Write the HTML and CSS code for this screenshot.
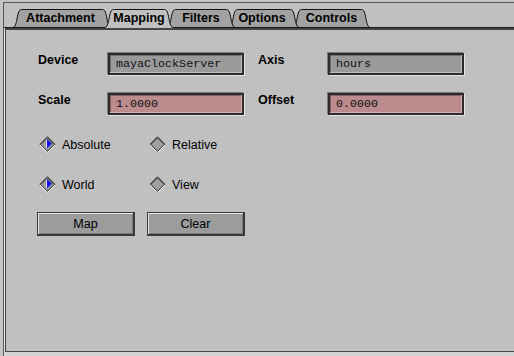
FILE: index.html
```html
<!DOCTYPE html>
<html lang="en">
<head>
    <title>Mapping</title>
    <link rel="stylesheet" href="styles.css">
</head>
<body>
    <div class="window">
        <div class="tabs">
            <div class="tab tab-attachment">
                <svg width="100" height="19"><path d="M0.5,18.5 C3,18.5 4,15 5,10 C6,4 7,0.5 9.5,0.5 L90.5,0.5 C93,0.5 94,4 95,10 C96,15 97,18.5 99.5,18.5 Z"/></svg>
                <span>Attachment</span>
            </div>
            <div class="tab tab-mapping active">
                <svg width="70" height="19"><path d="M0.5,19 L0.5,18.5 C3,18.5 4,15 5,10 C6,4 7,0.5 9.5,0.5 L60.5,0.5 C63,0.5 64,4 65,10 C66,15 67,18.5 69.5,18.5 L69.5,19"/></svg>
                <span>Mapping</span>
            </div>
            <div class="tab tab-filters">
                <svg width="70" height="19"><path d="M0.5,18.5 C3,18.5 4,15 5,10 C6,4 7,0.5 9.5,0.5 L60.5,0.5 C63,0.5 64,4 65,10 C66,15 67,18.5 69.5,18.5 Z"/></svg>
                <span>Filters</span>
            </div>
            <div class="tab tab-options">
                <svg width="72" height="19"><path d="M0.5,18.5 C3,18.5 4,15 5,10 C6,4 7,0.5 9.5,0.5 L62.5,0.5 C65,0.5 66,4 67,10 C68,15 69,18.5 71.5,18.5 Z"/></svg>
                <span>Options</span>
            </div>
            <div class="tab tab-controls">
                <svg width="79" height="19"><path d="M0.5,18.5 C3,18.5 4,15 5,10 C6,4 7,0.5 9.5,0.5 L69.5,0.5 C72,0.5 73,4 74,10 C75,15 76,18.5 78.5,18.5 Z"/></svg>
                <span>Controls</span>
            </div>
        </div>

        <div class="panel">
            <div class="frame">
                <div class="body">
                    <div class="fields">
                        <label>Device</label>
                        <div class="field">mayaClockServer</div>
                        <label>Axis</label>
                        <div class="field">hours</div>
                        <label>Scale</label>
                        <div class="field field-num">1.0000</div>
                        <label>Offset</label>
                        <div class="field field-num">0.0000</div>
                    </div>

                    <div class="radios">
                        <div class="radio on">
                            <svg width="17" height="17" viewBox="0 0 17 17">
                                <polygon class="fill" points="8.5,0.5 16.5,8.5 8.5,16.5 0.5,8.5"/>
                                <polyline class="lo" points="0.5,8.5 8.5,16.5 16.5,8.5"/>
                                <polyline class="hi" points="0.5,8.5 8.5,0.5 16.5,8.5"/>
                                <polygon class="edge" points="8.5,1.8 15.2,8.5 8.5,15.2 1.8,8.5"/>
                                <line class="dot-hi" x1="7.5" y1="3.5" x2="7.5" y2="12.5"/>
                                <polygon class="dot" points="8,3 13,7.8 8,12.6"/>
                            </svg>
                            <span>Absolute</span>
                        </div>
                        <div class="radio">
                            <svg width="17" height="17" viewBox="0 0 17 17">
                                <polygon class="fill" points="8.5,0.5 16.5,8.5 8.5,16.5 0.5,8.5"/>
                                <polyline class="lo" points="0.5,8.5 8.5,16.5 16.5,8.5"/>
                                <polyline class="hi" points="0.5,8.5 8.5,0.5 16.5,8.5"/>
                                <polygon class="edge" points="8.5,1.8 15.2,8.5 8.5,15.2 1.8,8.5"/>
                            </svg>
                            <span>Relative</span>
                        </div>
                        <div class="radio on">
                            <svg width="17" height="17" viewBox="0 0 17 17">
                                <polygon class="fill" points="8.5,0.5 16.5,8.5 8.5,16.5 0.5,8.5"/>
                                <polyline class="lo" points="0.5,8.5 8.5,16.5 16.5,8.5"/>
                                <polyline class="hi" points="0.5,8.5 8.5,0.5 16.5,8.5"/>
                                <polygon class="edge" points="8.5,1.8 15.2,8.5 8.5,15.2 1.8,8.5"/>
                                <line class="dot-hi" x1="7.5" y1="3.5" x2="7.5" y2="12.5"/>
                                <polygon class="dot" points="8,3 13,7.8 8,12.6"/>
                            </svg>
                            <span>World</span>
                        </div>
                        <div class="radio">
                            <svg width="17" height="17" viewBox="0 0 17 17">
                                <polygon class="fill" points="8.5,0.5 16.5,8.5 8.5,16.5 0.5,8.5"/>
                                <polyline class="lo" points="0.5,8.5 8.5,16.5 16.5,8.5"/>
                                <polyline class="hi" points="0.5,8.5 8.5,0.5 16.5,8.5"/>
                                <polygon class="edge" points="8.5,1.8 15.2,8.5 8.5,15.2 1.8,8.5"/>
                            </svg>
                            <span>View</span>
                        </div>
                    </div>

                    <div class="buttons">
                        <button class="btn">Map</button>
                        <button class="btn">Clear</button>
                    </div>
                </div>
            </div>
        </div>
    </div>
</body>
</html>
```

FILE: styles.css
```css
*{
    margin: 0;
    box-sizing: border-box;
}
body{
    background-color: #c4c4c4;
    font-family: "Liberation Sans", Arial, sans-serif;
    color: #000;
    height: 356px;
    overflow: hidden;
}

.window{
    margin: 2px 0 0 3px;
    border-top: 1px solid #5a5a5a;
    border-left: 1px solid #5a5a5a;
    background-color: #c0c0c0;
}

/* tab strip */
.tabs{
    height: 24px;
    display: flex;
    align-items: flex-end;
    padding-left: 8px;
}
.tab{
    position: relative;
    height: 19px;
    margin-bottom: -1px;
    margin-left: -8px;
    font-size: 12.5px;
    font-weight: 700;
    line-height: 19px;
    text-align: center;
}
.tab svg{
    position: absolute;
    left: 0;
    top: 0;
}
.tab path{
    fill: #a2a2a2;
    stroke: #141414;
    stroke-width: 1;
}
.tab span{
    position: relative;
}
.tab.active path{
    fill: #c0c0c0;
}
.tab-attachment{ width: 100px; margin-left: 0; padding-right: 3px; z-index: 1; }
.tab-mapping{ width: 70px; z-index: 10; }
.tab-filters{ width: 70px; z-index: 4; }
.tab-options{ width: 72px; z-index: 3; padding-right: 4px; }
.tab-controls{ width: 79px; z-index: 2; }

/* page frame */
.panel{
    border-top: 1px solid #1c1c1c;
}
.frame{
    border-left: 1px solid #e2e2e2;
    border-bottom: 4px solid #d4d4d4;
}
.body{
    height: 324px;
    border-top: 2px solid #454545;
    border-left: 1px solid #454545;
    border-bottom: 1px solid #454545;
    padding: 23px 0 0 32px;
}

/* text fields */
.fields{
    display: grid;
    grid-template-columns: 70px 150px 70px 136px;
    row-gap: 18px;
    align-items: start;
}
.fields label{
    font-size: 12.5px;
    font-weight: 700;
    line-height: 14px;
}
.field{
    width: 136px;
    height: 22px;
    border: 2px solid #2c2c2c;
    background-color: #9a9a9a;
    box-shadow: 1px 1px 0 #e4e4e4, -1px -1px 0 #7a7a7a, inset -1px -1px 0 #bdbdbd, inset 1px 1px 0 #6e6e6e;
    padding-left: 6px;
    font-family: "Liberation Mono", monospace;
    font-size: 11.7px;
    line-height: 18px;
    color: #111;
}
.field-num{
    background-color: #bb8b8d;
    box-shadow: 1px 1px 0 #e4e4e4, -1px -1px 0 #7a7a7a, inset -1px -1px 0 #d7aeb0, inset 1px 1px 0 #8a5e60;
}

/* radio diamonds */
.radios{
    display: grid;
    grid-template-columns: 110px auto;
    row-gap: 23px;
    margin: 21px 0 0 1px;
}
.radio{
    display: flex;
    align-items: center;
    gap: 6px;
    height: 17px;
    font-size: 12.5px;
}
.radio svg{
    display: block;
}
.radio .fill{
    fill: #a0a0a0;
}
.radio .hi{
    fill: none;
    stroke: #5c5c5c;
}
.radio .lo{
    fill: none;
    stroke: #f2f2f2;
}
.radio .edge{
    fill: none;
    stroke: #2a2a2a;
    stroke-width: 1;
}
.radio .dot{
    fill: #1414e6;
}
.radio .dot-hi{
    stroke: #dcdcdc;
    stroke-width: 1;
}

/* push buttons */
.buttons{
    display: flex;
    gap: 12px;
    margin: 19px 0 0 -1px;
}
.btn{
    width: 98px;
    height: 24px;
    padding: 0;
    border: 1px solid #3a3a3a;
    border-right-width: 2px;
    border-bottom-width: 2px;
    background-color: #9c9c9c;
    box-shadow: inset 1px 1px 0 #e6e6e6, inset -1px -1px 0 #7a7a7a;
    font-family: "Liberation Sans", Arial, sans-serif;
    font-size: 12.5px;
    color: #000;
}
```
